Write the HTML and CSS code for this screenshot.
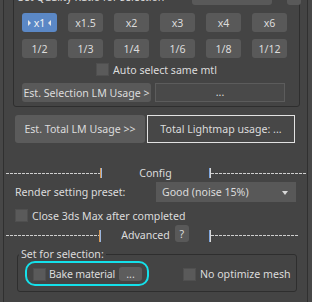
FILE: index.html
```html
<!DOCTYPE html>
<html lang="en">
<head>
    <meta charset="UTF-8">
    <title>Lightmap Baker</title>
    <link rel="stylesheet" href="styles.css">
</head>
<body>
    <div class="panel">
        <div class="head">
            <span class="head-legend">Set Quality Ratio for selection</span>
            <button class="btn btn-auto">Auto set ratio</button>
            <button class="btn btn-help">?</button>
        </div>

        <div class="group">
            <div class="ratio-grid">
                <button class="btn active"><span class="tri-r"></span>x1<span class="tri-l"></span></button>
                <button class="btn">x1.5</button>
                <button class="btn">x2</button>
                <button class="btn">x3</button>
                <button class="btn">x4</button>
                <button class="btn">x6</button>
            </div>
            <div class="ratio-grid second">
                <button class="btn">1/2</button>
                <button class="btn">1/3</button>
                <button class="btn">1/4</button>
                <button class="btn">1/6</button>
                <button class="btn">1/8</button>
                <button class="btn">1/12</button>
            </div>
            <label class="check auto-check"><span class="box"></span>Auto select same mtl</label>
            <div class="est-row">
                <button class="btn est-btn">Est. Selection LM Usage &gt;</button>
                <div class="field">...</div>
            </div>
        </div>

        <div class="total-row">
            <button class="btn total-btn">Est. Total LM Usage &gt;&gt;</button>
            <div class="total-field">Total Lightmap usage: ...</div>
        </div>

        <div class="sep sep-config">
            <span class="dash"></span>
            <span class="bar"></span>
            <span class="sep-label">Config</span>
            <span class="bar bar-b"></span>
            <span class="dash"></span>
        </div>

        <div class="preset-row">
            <span>Render setting preset:</span>
            <div class="select">Good (noise 15%)<span class="arrow"></span></div>
        </div>

        <label class="check close-check"><span class="box"></span>Close 3ds Max after completed</label>

        <div class="sep sep-adv">
            <span class="dash"></span>
            <span class="bar"></span>
            <span class="sep-label">Advanced <span class="mini-help">?</span></span>
            <span class="bar bar-b"></span>
            <span class="dash"></span>
        </div>

        <fieldset class="sel-group">
            <legend>Set for selection:</legend>
            <div class="sel-row">
                <span class="highlight"></span>
                <label class="check bake-check"><span class="box"></span>Bake material</label>
                <button class="btn dots">...</button>
                <label class="check no-opt"><span class="box"></span>No optimize mesh</label>
            </div>
        </fieldset>
    </div>
</body>
</html>
```

FILE: styles.css
```css
* {
    margin: 0;
    padding: 0;
    box-sizing: border-box;
}

body {
    background: #474747;
    font-family: "Noto Sans", "Open Sans", sans-serif;
    font-size: 10.6px;
    line-height: 14px;
    color: #dcdcdc;
    overflow: hidden;
    white-space: nowrap;
}

.panel {
    margin-left: 3px;
    width: 305px;
    height: 302px;
    background: #444444;
    border-left: 1px solid #303030;
    border-right: 1px solid #303030;
    overflow: hidden;
}

.btn {
    font: inherit;
    color: #dcdcdc;
    background: #595959;
    border: none;
    border-radius: 3px;
    height: 19px;
    display: flex;
    align-items: center;
    justify-content: center;
    white-space: nowrap;
}

/* top group */
.head {
    margin-top: -14px;
    height: 19px;
    display: flex;
    padding: 0 6px 0 14px;
}

.head-legend {
    align-self: flex-end;
    margin-bottom: 1px;
}

.btn-auto {
    margin-left: auto;
    width: 80px;
}

.btn-help {
    margin-left: 15px;
    width: 14px;
}

.group {
    margin: -10px 0 0 9px;
    width: 287px;
    border: 1px solid #2e2e2e;
    border-radius: 3px;
    padding: 17px 8px 4px 8px;
}

.ratio-grid {
    display: grid;
    grid-template-columns: repeat(6, 35px);
    column-gap: 11px;
}

.ratio-grid.second {
    margin-top: 7px;
}

.btn.active {
    background: #5b88c6;
    color: #f4f4f4;
    gap: 3px;
}

.tri-r {
    border-left: 3px solid #e6e6e6;
    border-top: 3px solid transparent;
    border-bottom: 3px solid transparent;
}

.tri-l {
    border-right: 3px solid #e6e6e6;
    border-top: 3px solid transparent;
    border-bottom: 3px solid transparent;
}

.check {
    display: flex;
    align-items: center;
    gap: 4px;
    height: 13px;
    flex-shrink: 0;
}

.box {
    width: 13px;
    height: 13px;
    flex-shrink: 0;
    background: #5a5a5a;
    border: 1px solid #4f4f4f;
}

.auto-check {
    margin-top: 5px;
    justify-content: center;
}

.est-row {
    margin-top: 7px;
    display: flex;
    gap: 4px;
}

.est-btn {
    width: 129px;
}

.field {
    width: 130px;
    height: 19px;
    background: #494949;
    border: 1px solid #5c5c5c;
    text-align: center;
    line-height: 16px;
}

/* total */
.total-row {
    margin: 8px 0 0 11px;
    display: flex;
    gap: 2px;
    height: 28px;
}

.total-btn {
    width: 130px;
    height: 28px;
    background: #5b5b5b;
}

.total-field {
    width: 148px;
    border: 1px solid #e2e2e2;
    background: #474747;
    display: flex;
    align-items: center;
    justify-content: center;
}

/* separators */
.sep {
    display: grid;
    align-items: center;
    margin-left: 2px;
}

.sep-config {
    margin-top: 23px;
    height: 12px;
    grid-template-columns: 94px 2px 107px 2px 95px;
}

.sep-adv {
    margin-top: 3px;
    height: 17px;
    grid-template-columns: 93px 2px 108px 2px 88px;
}

.dash {
    height: 1px;
    background: repeating-linear-gradient(90deg, #cfcfcf 0 3px, transparent 3px 4px);
}

.bar {
    height: 10px;
    border-left: 1px solid #d89a55;
    border-right: 1px solid #9bb5dd;
}

.bar-b {
    border-left-color: #7fa6de;
    border-right-color: #d8d8d8;
}

.sep-adv .dash {
    align-self: end;
    margin-bottom: 6px;
}

.sep-adv .bar {
    align-self: end;
    height: 12px;
}

.sep-label {
    display: flex;
    align-items: center;
    justify-content: center;
    gap: 5px;
}

.sep-adv .sep-label {
    align-self: end;
    height: 17px;
    padding-top: 3px;
}

.mini-help {
    width: 14px;
    height: 17px;
    margin-top: -3px;
    background: #595959;
    border-radius: 3px;
    display: flex;
    align-items: center;
    justify-content: center;
}

/* config */
.preset-row {
    margin-top: 4px;
    height: 20px;
    padding: 0 11px;
    display: flex;
    align-items: center;
    justify-content: space-between;
}

.select {
    width: 140px;
    height: 20px;
    background: #585858;
    padding-left: 6px;
    display: flex;
    align-items: center;
    position: relative;
}

.arrow {
    position: absolute;
    right: 8px;
    top: 9px;
    border-top: 4px solid #d8d8d8;
    border-left: 3px solid transparent;
    border-right: 3px solid transparent;
}

.close-check {
    margin: 7px 0 0 11px;
}

/* advanced */
.sel-group {
    margin: 5px 0 0 13px;
    width: 280px;
    border: 1px solid #2e2e2e;
    border-radius: 3px;
    padding: 6px 0 10px 15px;
}

.sel-group legend {
    margin-left: -14px;
    padding: 0 2px;
}

.sel-row {
    position: relative;
    display: flex;
    align-items: center;
    height: 14px;
}

.bake-check {
    width: 86px;
    gap: 3px;
    letter-spacing: -0.2px;
}

.dots {
    width: 23px;
    height: 14px;
    background: #5d5d5d;
}

.no-opt {
    margin-left: 41px;
}

.highlight {
    position: absolute;
    left: -8px;
    top: -6px;
    width: 124px;
    height: 25px;
    border: 2px solid #14e0ea;
    border-radius: 10px;
}
```
